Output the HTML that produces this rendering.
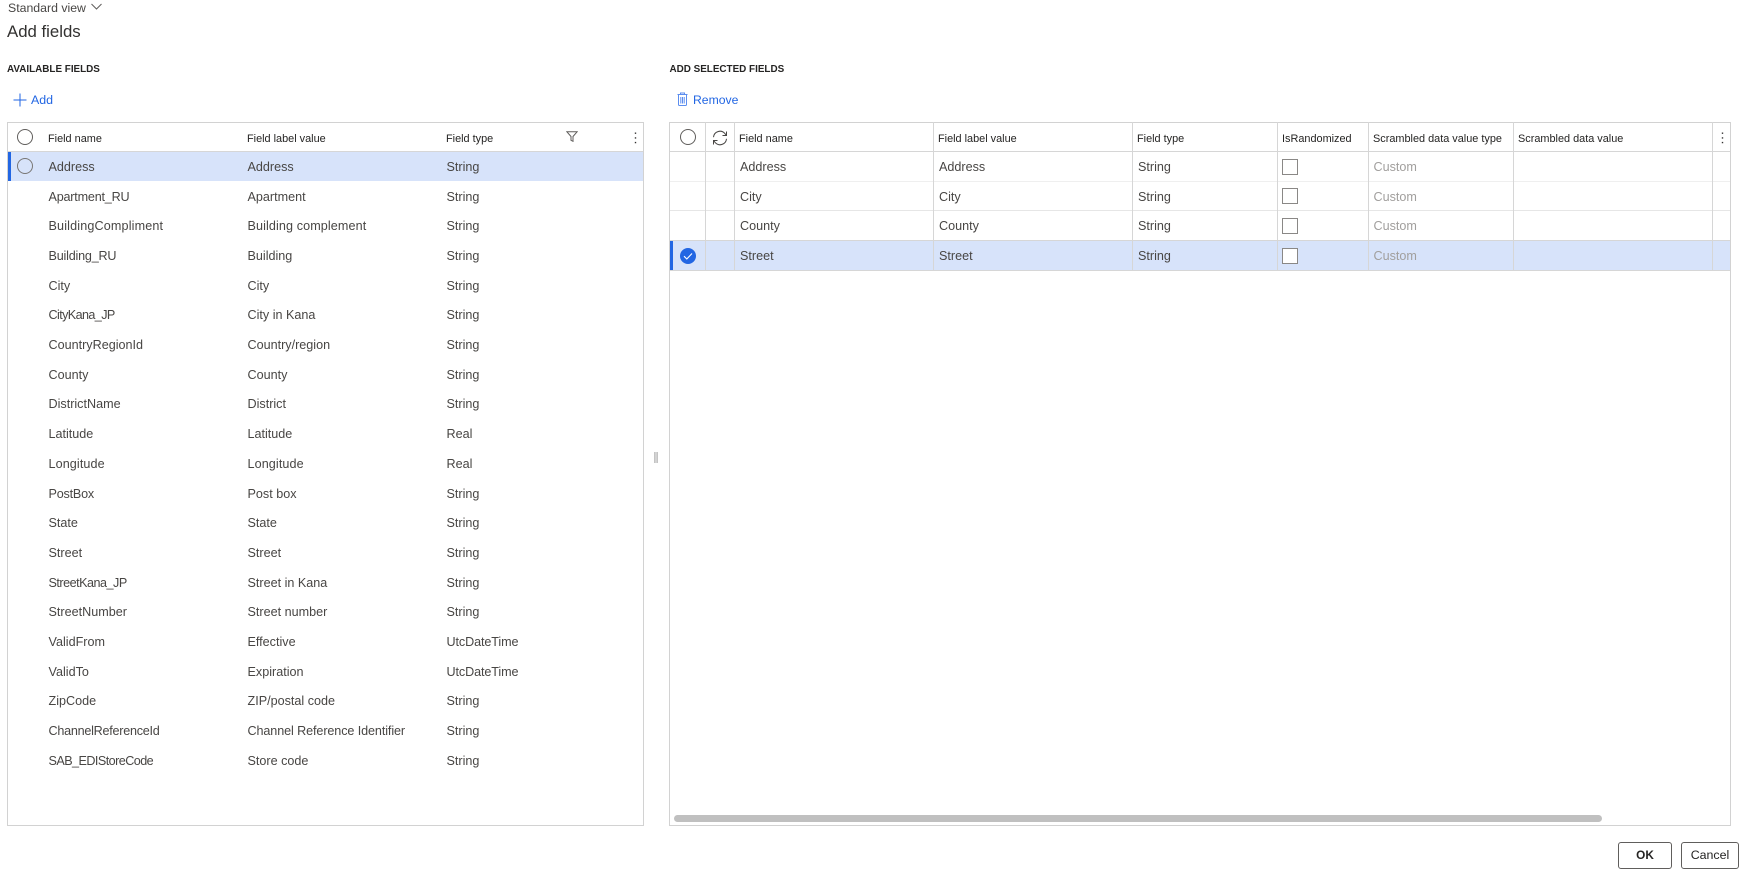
<!DOCTYPE html>
<html lang="en">
<head>
<meta charset="utf-8">
<title>Add fields</title>
<style>
html,body{margin:0;padding:0;background:#fff}
body{position:relative;width:1746px;height:878px;overflow:hidden;font-family:"Liberation Sans",sans-serif;color:#323130}
.a{position:absolute;white-space:nowrap}
.box{position:absolute;box-sizing:border-box;border:1px solid #d2d2d2;background:#fff}
.row{position:absolute;height:30px;line-height:30px;font-size:12.6px;color:#484644}
.row span{position:absolute;top:0;white-space:nowrap}
.l{left:0;width:0}
.l span:nth-child(1){left:48.5px}.l span:nth-child(2){left:247.5px}.l span:nth-child(3){left:446.5px}
.rr{left:0;width:0}
.rr span:nth-child(1){left:740px}.rr span:nth-child(2){left:939px}.rr span:nth-child(3){left:1138px}
.rr span:nth-child(4){left:1373.5px;color:#a19f9d}
.h{position:absolute;top:131px;line-height:16px;font-size:10.9px;color:#252423;white-space:nowrap}
.sec{position:absolute;top:63px;font-size:9.9px;font-weight:bold;line-height:14px;color:#252423;white-space:nowrap}
.link{position:absolute;top:92px;line-height:16px;font-size:12.4px;color:#2266e3;white-space:nowrap}
.v{position:absolute;top:122px;width:1px;height:148px;background:#d6d6d6}
.hl{position:absolute;left:670px;width:1060px;height:1px}
.cb{position:absolute;left:1282px;width:16px;height:16px;box-sizing:border-box;border:1px solid #8a8886;background:#fff}
.circ{position:absolute;box-sizing:border-box;width:16px;height:16px;border-radius:50%;border:1px solid #605e5c}
.btn{position:absolute;top:842px;height:27px;box-sizing:border-box;border:1px solid #605e5c;border-radius:3px;background:#fff;text-align:center;font-size:12.4px;line-height:25px;color:#252423}
</style>
</head>
<body>
<div class="a" style="left:8px;top:0;font-size:12.3px;line-height:16px;color:#484644">Standard view</div>
<svg class="a" style="left:91px;top:3px" width="11" height="7" viewBox="0 0 11 7"><path d="M.5 1l5 5 5-5" fill="none" stroke="#605e5c" stroke-width="1"/></svg>
<div class="a" style="left:7px;top:22px;font-size:16.8px;line-height:20px;color:#323130">Add fields</div>

<div class="sec" style="left:7px">AVAILABLE FIELDS</div>
<div class="sec" style="left:669.5px">ADD SELECTED FIELDS</div>

<svg class="a" style="left:13px;top:93px" width="14" height="14" viewBox="0 0 14 14"><path d="M7 .5v13M.5 7h13" fill="none" stroke="#2266e3" stroke-width="1"/></svg>
<div class="link" style="left:31px">Add</div>
<svg class="a" style="left:677px;top:92px" width="11" height="14" viewBox="0 0 11 14"><path d="M1.5 3v9.5a1 1 0 0 0 1 1h6a1 1 0 0 0 1-1V3M.5 2.5h10M3.5 2.5v-1.5h4v1.5M3.8 5v6.5M5.5 5v6.5M7.2 5v6.5" fill="none" stroke="#5b8def" stroke-width="1"/></svg>
<div class="link" style="left:693px;font-size:12.2px">Remove</div>

<!-- LEFT TABLE -->
<div class="box" style="left:7px;top:122px;width:637px;height:704px"></div>
<div class="a" style="left:8px;top:151px;width:635px;height:1px;background:#d6d6d6"></div>
<div class="a" style="left:8px;top:152px;width:635px;height:29px;background:#d7e3fa"></div>
<div class="a" style="left:8px;top:152px;width:3px;height:29px;background:#2266e3"></div>
<div class="circ" style="left:17px;top:129px"></div>
<div class="circ" style="left:17px;top:158px;border-color:#797775"></div>
<div class="h" style="left:48px">Field name</div>
<div class="h" style="left:247px">Field label value</div>
<div class="h" style="left:446px">Field type</div>
<svg class="a" style="left:566px;top:131px" width="12" height="11" viewBox="0 0 12 11"><path d="M.8.7h10.4L7 5.5v4.8L5 9.3V5.5z" fill="none" stroke="#605e5c" stroke-width="1"/></svg>
<svg class="a" style="left:634px;top:131px" width="3" height="14" viewBox="0 0 3 14"><path d="M.8 1.5h1.4v1.4H.8zM.8 6.2h1.4v1.4H.8zM.8 10.9h1.4v1.4H.8z" fill="#323130"/></svg>

<div class="row l" style="top:152px"><span>Address</span><span>Address</span><span>String</span></div>
<div class="row l" style="top:182px"><span style="letter-spacing:-.2px">Apartment_RU</span><span>Apartment</span><span>String</span></div>
<div class="row l" style="top:211px"><span style="letter-spacing:.15px">BuildingCompliment</span><span style="letter-spacing:.1px">Building complement</span><span>String</span></div>
<div class="row l" style="top:241px"><span style="letter-spacing:-.2px">Building_RU</span><span>Building</span><span>String</span></div>
<div class="row l" style="top:271px"><span>City</span><span>City</span><span>String</span></div>
<div class="row l" style="top:300px"><span style="letter-spacing:-.6px">CityKana_JP</span><span>City in Kana</span><span>String</span></div>
<div class="row l" style="top:330px"><span>CountryRegionId</span><span>Country/region</span><span>String</span></div>
<div class="row l" style="top:360px"><span>County</span><span>County</span><span>String</span></div>
<div class="row l" style="top:389px"><span>DistrictName</span><span>District</span><span>String</span></div>
<div class="row l" style="top:419px"><span>Latitude</span><span>Latitude</span><span>Real</span></div>
<div class="row l" style="top:449px"><span style="letter-spacing:.1px">Longitude</span><span style="letter-spacing:.1px">Longitude</span><span>Real</span></div>
<div class="row l" style="top:479px"><span style="letter-spacing:-.2px">PostBox</span><span>Post box</span><span>String</span></div>
<div class="row l" style="top:508px"><span>State</span><span>State</span><span>String</span></div>
<div class="row l" style="top:538px"><span>Street</span><span>Street</span><span>String</span></div>
<div class="row l" style="top:568px"><span style="letter-spacing:-.5px">StreetKana_JP</span><span>Street in Kana</span><span>String</span></div>
<div class="row l" style="top:597px"><span>StreetNumber</span><span>Street number</span><span>String</span></div>
<div class="row l" style="top:627px"><span>ValidFrom</span><span>Effective</span><span style="letter-spacing:-.1px">UtcDateTime</span></div>
<div class="row l" style="top:657px"><span>ValidTo</span><span>Expiration</span><span style="letter-spacing:-.1px">UtcDateTime</span></div>
<div class="row l" style="top:686px"><span>ZipCode</span><span>ZIP/postal code</span><span>String</span></div>
<div class="row l" style="top:716px"><span style="letter-spacing:-.25px">ChannelReferenceId</span><span style="letter-spacing:-.1px">Channel Reference Identifier</span><span>String</span></div>
<div class="row l" style="top:746px"><span style="letter-spacing:-.55px">SAB_EDIStoreCode</span><span>Store code</span><span>String</span></div>

<!-- SPLITTER -->
<div class="a" style="left:654px;top:452px;width:4px;height:11px;background:linear-gradient(90deg,#c4c4c4 0,#c4c4c4 25%,#e2e2e2 50%,#c4c4c4 75%,#c4c4c4 100%)"></div>

<!-- RIGHT TABLE -->
<div class="box" style="left:669px;top:122px;width:1062px;height:704px"></div>
<div class="a" style="left:670px;top:241px;width:1060px;height:29px;background:#d7e3fa"></div>
<div class="a" style="left:670px;top:240px;width:3px;height:30px;background:#2266e3"></div>
<div class="hl" style="top:151px;background:#d6d6d6"></div>
<div class="hl" style="top:181px;background:#efefef"></div>
<div class="hl" style="top:210px;background:#e6e6e6"></div>
<div class="hl" style="top:240px;background:#d6d6d6"></div>
<div class="hl" style="top:270px;background:#d6d6d6"></div>
<div class="v" style="left:705px"></div>
<div class="v" style="left:734px"></div>
<div class="v" style="left:933px"></div>
<div class="v" style="left:1132px"></div>
<div class="v" style="left:1277px"></div>
<div class="v" style="left:1368px"></div>
<div class="v" style="left:1513px"></div>
<div class="v" style="left:1712px"></div>

<div class="circ" style="left:680px;top:129px"></div>
<svg class="a" style="left:712px;top:130px" width="16" height="16" viewBox="0 0 16 16"><path d="M1.5 7.2A6.5 6.5 0 0 1 12.8 3.4L14.5 5.5M14.5 1.5v4h-4M14.5 8.8A6.5 6.5 0 0 1 3.2 12.6L1.5 10.5M1.5 14.5v-4h4" fill="none" stroke="#484644" stroke-width="1"/></svg>
<div class="h" style="left:739px">Field name</div>
<div class="h" style="left:938px">Field label value</div>
<div class="h" style="left:1137px">Field type</div>
<div class="h" style="left:1282px">IsRandomized</div>
<div class="h" style="left:1373px">Scrambled data value type</div>
<div class="h" style="left:1518px">Scrambled data value</div>
<svg class="a" style="left:1721px;top:131px" width="3" height="14" viewBox="0 0 3 14"><path d="M.8 1.5h1.4v1.4H.8zM.8 6.2h1.4v1.4H.8zM.8 10.9h1.4v1.4H.8z" fill="#323130"/></svg>

<div class="row rr" style="top:152px"><span>Address</span><span>Address</span><span>String</span><span>Custom</span></div>
<div class="row rr" style="top:182px"><span>City</span><span>City</span><span>String</span><span>Custom</span></div>
<div class="row rr" style="top:211px"><span>County</span><span>County</span><span>String</span><span>Custom</span></div>
<div class="row rr" style="top:241px"><span>Street</span><span>Street</span><span>String</span><span>Custom</span></div>

<div class="cb" style="top:159px"></div>
<div class="cb" style="top:188px"></div>
<div class="cb" style="top:218px"></div>
<div class="cb" style="top:248px"></div>

<svg class="a" style="left:680px;top:248px" width="16" height="16" viewBox="0 0 16 16"><circle cx="8" cy="8" r="8" fill="#2266e3"/><path d="M4 8.2l2.8 2.8L12 5.5" fill="none" stroke="#fff" stroke-width="1.1"/></svg>

<div class="a" style="left:674px;top:815px;width:928px;height:7px;border-radius:4px;background:#c0c0c0"></div>

<div class="btn" style="left:1618px;width:54px;font-weight:bold;font-size:11.8px">OK</div>
<div class="btn" style="left:1681px;width:58px">Cancel</div>
</body>
</html>
